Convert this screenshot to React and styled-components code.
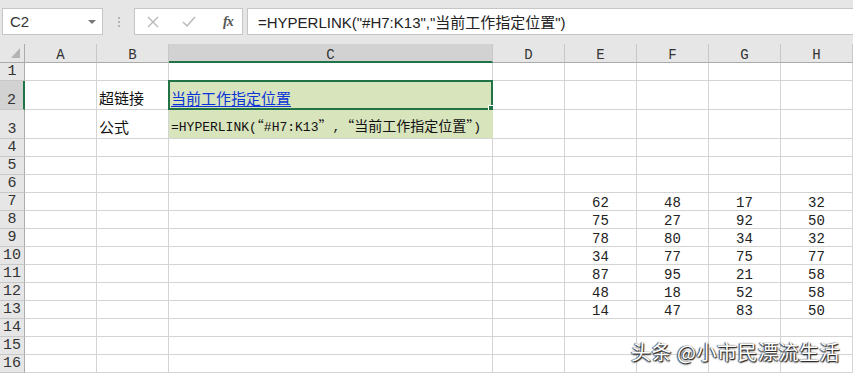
import React from "react";
import styled, { createGlobalStyle } from "styled-components";

const GlobalStyle = createGlobalStyle`
  html, body {
    margin: 0;
    padding: 0;
    background: #ffffff;
    overflow: hidden;
  }
  body {
    font-family: "Noto Sans CJK SC", "Liberation Sans", sans-serif;
  }
`;

const GREEN = "#217346";
const FILL = "#d8e4bc";

const Page = styled.div`
  position: relative;
  width: 853px;
  height: 374px;
  overflow: hidden;
  background: #ffffff;
`;

const FormulaBar = styled.div`
  height: 44px;
  background: #e6e6e6;
  display: flex;
  align-items: flex-start;
  padding: 8px 0 0 2px;
  box-sizing: border-box;
`;

const NameBox = styled.div`
  width: 101px;
  height: 27px;
  box-sizing: border-box;
  background: #ffffff;
  border: 1px solid #c6c6c6;
  display: flex;
  align-items: center;
  justify-content: space-between;
  padding: 0 6px 0 7px;
  font-family: "Liberation Sans", sans-serif;
  font-size: 15px;
  color: #333;
`;

const Arrow = styled.span`
  width: 0;
  height: 0;
  border-left: 4px solid transparent;
  border-right: 4px solid transparent;
  border-top: 4px solid #777;
`;

const Dots = styled.div`
  width: 31px;
  height: 27px;
  display: flex;
  flex-direction: column;
  align-items: center;
  justify-content: center;
  gap: 2px;
  span {
    width: 2px;
    height: 2px;
    background: #b5b5b5;
  }
`;

const ButtonBox = styled.div`
  width: 109px;
  height: 27px;
  box-sizing: border-box;
  background: #ffffff;
  border: 1px solid #c6c6c6;
  display: flex;
  align-items: center;
  padding: 0 0 0 12px;
  gap: 23px;
`;

const Fx = styled.span`
  font-family: "Liberation Serif", serif;
  font-style: italic;
  font-weight: bold;
  font-size: 14px;
  color: #555;
  margin-left: 4px;
  letter-spacing: -1px;
`;

const FormulaInput = styled.div`
  flex: 1;
  margin-left: 4px;
  height: 27px;
  box-sizing: border-box;
  background: #ffffff;
  border: 1px solid #c6c6c6;
  border-right: none;
  display: flex;
  align-items: center;
  padding-left: 10px;
  font-family: "Liberation Sans", "Noto Sans CJK SC", sans-serif;
  font-size: 15px;
  color: #222;
`;

const Sheet = styled.div`
  display: grid;
  grid-template-columns: 25px 72px 72px 324px 72px 72px 72px 72px 72px;
  grid-template-rows: 19px 18px 29px 29px repeat(13, 18px);
`;

const Corner = styled.div`
  background: #e6e6e6;
  border-right: 1px solid #ababab;
  border-bottom: 1px solid #ababab;
  box-sizing: border-box;
  display: flex;
  align-items: flex-end;
  justify-content: flex-end;
  padding: 0 4px 4px 0;
`;

const ColHead = styled.div`
  background: ${(p) => (p.$active ? "#d2d2d2" : "#e6e6e6")};
  border-right: 1px solid #c8c8c8;
  border-bottom: ${(p) => (p.$active ? `2px solid ${GREEN}` : "1px solid #ababab")};
  box-sizing: border-box;
  display: flex;
  align-items: center;
  justify-content: center;
  font-family: "Liberation Mono", monospace;
  font-size: 14px;
  color: #333;
  padding-top: 4px;
`;

const RowHead = styled.div`
  background: ${(p) => (p.$active ? "#d2d2d2" : "#e6e6e6")};
  border-right: ${(p) => (p.$active ? `2px solid ${GREEN}` : "1px solid #ababab")};
  border-bottom: 1px solid #c8c8c8;
  box-sizing: border-box;
  display: flex;
  align-items: flex-end;
  justify-content: center;
  font-family: "Liberation Mono", monospace;
  font-size: 15px;
  line-height: 16px;
  color: #333;
`;

const Cell = styled.div`
  position: relative;
  background: ${(p) => p.$fill || "#ffffff"};
  border-right: 1px solid ${(p) => (p.$fill ? p.$fill : "#d4d4d4")};
  border-bottom: 1px solid #d4d4d4;
  box-sizing: border-box;
  display: flex;
  align-items: flex-end;
  justify-content: ${(p) => (p.$center ? "center" : "flex-start")};
  padding: 0 2px ${(p) => (p.$center ? "0" : "2px")} 2px;
  font-size: 15px;
  line-height: 18px;
  color: #111;
  white-space: nowrap;
  overflow: visible;
`;

const NumText = styled.span`
  font-family: "Liberation Mono", monospace;
  font-size: 14px;
  line-height: 14px;
  color: #222;
`;

const LinkText = styled.span`
  color: #0b33d9;
  text-decoration: underline;
  text-underline-offset: 2px;
  font-size: 15px;
`;

const FormulaText = styled.span`
  font-family: "Liberation Mono", monospace;
  font-size: 13px;
  line-height: 16px;
  color: #111;
  em {
    font-style: normal;
    font-family: "Noto Sans CJK SC", sans-serif;
    font-size: 14px;
  }
`;

const SelBorder = styled.div`
  position: absolute;
  left: -1px;
  top: -1px;
  right: -1px;
  bottom: -1px;
  border: 2px solid ${GREEN};
  pointer-events: none;
`;

const Handle = styled.div`
  position: absolute;
  right: -5px;
  bottom: -5px;
  width: 6px;
  height: 6px;
  background: ${GREEN};
  border: 1px solid #ffffff;
`;

const Watermark = styled.div`
  position: absolute;
  right: 13px;
  bottom: 8px;
  font-family: "Noto Sans CJK SC", sans-serif;
  font-size: 20px;
  color: #ffffff;
  text-shadow: 1px 1px 1px #222, -1px 0 1px #444, 0 1px 2px #333;
  letter-spacing: 0.5px;
`;

const COLS = ["A", "B", "C", "D", "E", "F", "G", "H"];

const NUMBERS = [
  [62, 48, 17, 32],
  [75, 27, 92, 50],
  [78, 80, 34, 32],
  [34, 77, 75, 77],
  [87, 95, 21, 58],
  [48, 18, 52, 58],
  [14, 47, 83, 50],
];

const CrossIcon = () => (
  <svg width="12" height="12" viewBox="0 0 12 12">
    <path d="M1 1 L11 11 M11 1 L1 11" stroke="#b9b9b9" strokeWidth="1.4" fill="none" />
  </svg>
);

const CheckIcon = () => (
  <svg width="14" height="12" viewBox="0 0 14 12">
    <path d="M1 6 L5 10 L13 1" stroke="#b9b9b9" strokeWidth="1.5" fill="none" />
  </svg>
);

const CornerTriangle = () => (
  <svg width="9" height="10" viewBox="0 0 9 10">
    <path d="M9 0 L9 10 L0 10 Z" fill="#b4b4b4" />
  </svg>
);

const renderCell = (row, colIdx) => {
  const col = COLS[colIdx];
  if (row === 2 && col === "B") return <Cell key={col}>超链接</Cell>;
  if (row === 3 && col === "B") return <Cell key={col}>公式</Cell>;
  if (row === 2 && col === "C")
    return (
      <Cell key={col} $fill={FILL}>
        <LinkText>当前工作指定位置</LinkText>
        <SelBorder>
          <Handle />
        </SelBorder>
      </Cell>
    );
  if (row === 3 && col === "C")
    return (
      <Cell key={col} $fill={FILL}>
        <FormulaText>
          =HYPERLINK(<em>“</em>#H7:K13<em>”</em>,<em>“当前工作指定位置”</em>)
        </FormulaText>
      </Cell>
    );
  if (row >= 7 && row <= 13 && colIdx >= 4) {
    return (
      <Cell key={col} $center>
        <NumText>{NUMBERS[row - 7][colIdx - 4]}</NumText>
      </Cell>
    );
  }
  return <Cell key={col} />;
};

const App = () => {
  const rows = Array.from({ length: 16 }, (_, i) => i + 1);
  return (
    <Page>
      <GlobalStyle />
      <FormulaBar>
        <NameBox>
          C2
          <Arrow />
        </NameBox>
        <Dots>
          <span />
          <span />
          <span />
        </Dots>
        <ButtonBox>
          <CrossIcon />
          <CheckIcon />
          <Fx>fx</Fx>
        </ButtonBox>
        <FormulaInput>=HYPERLINK("#H7:K13","当前工作指定位置")</FormulaInput>
      </FormulaBar>
      <Sheet>
        <Corner>
          <CornerTriangle />
        </Corner>
        {COLS.map((c) => (
          <ColHead key={c} $active={c === "C"}>
            {c}
          </ColHead>
        ))}
        {rows.map((r) => (
          <React.Fragment key={r}>
            <RowHead $active={r === 2}>{r}</RowHead>
            {COLS.map((_, ci) => renderCell(r, ci))}
          </React.Fragment>
        ))}
      </Sheet>
      <Watermark>头条 @小市民漂流生活</Watermark>
    </Page>
  );
};

export default App;
